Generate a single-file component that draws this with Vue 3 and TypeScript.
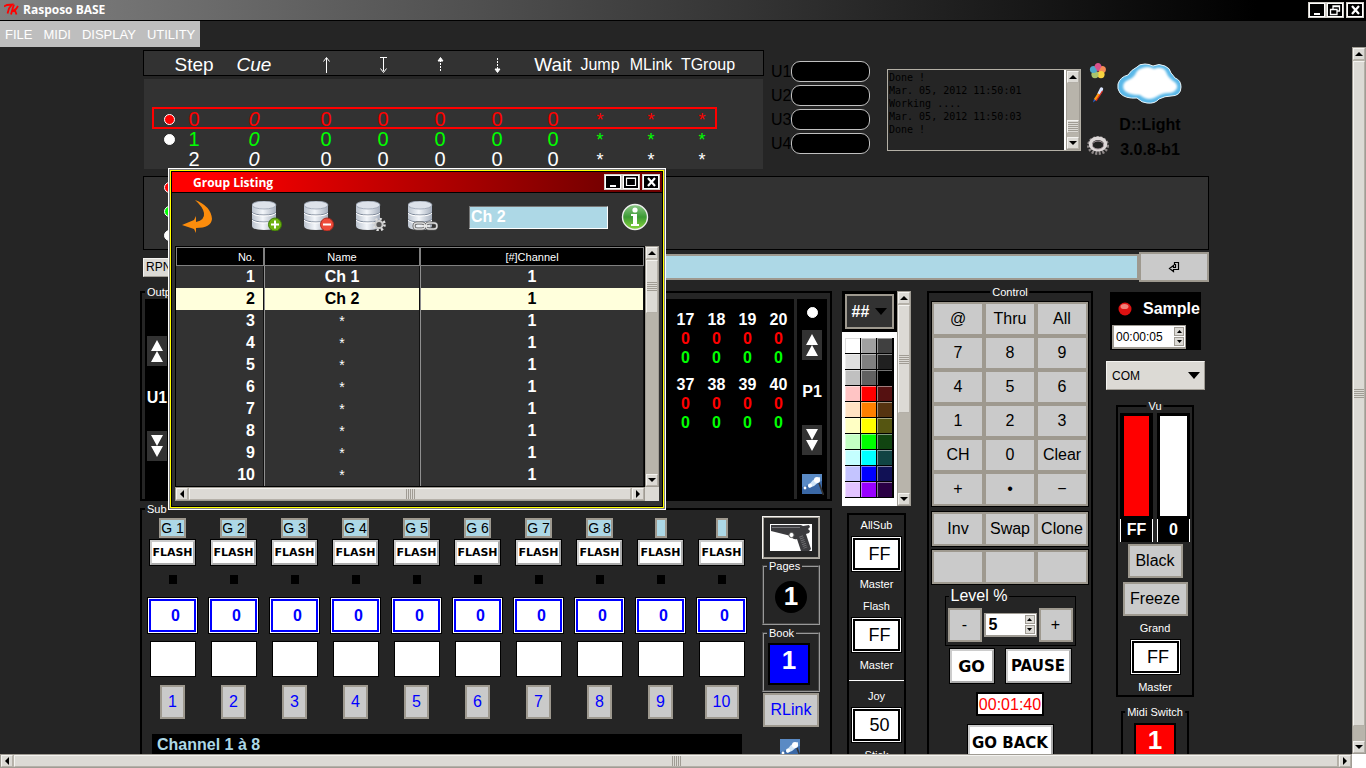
<script setup lang="ts">
import { defineComponent, h, ref } from 'vue'

const ScrollBar = defineComponent({
  props: {
    horizontal: Boolean,
    start: { type: Number, default: 0 },
    size: { type: Number, default: 100 },
  },
  setup(props) {
    const arrow = (label: string, d: string) =>
      h('button', { class: 'sb-arrow', 'aria-label': label }, [
        h('svg', { viewBox: '0 0 8 8', width: 8, height: 8 }, [h('path', { d })]),
      ])
    return () => {
      const thumb = props.horizontal
        ? { left: props.start + '%', width: props.size + '%' }
        : { top: props.start + '%', height: props.size + '%' }
      return h('div', { class: ['sb', props.horizontal ? 'sb-h' : 'sb-v'] }, [
        props.horizontal
          ? arrow('Scroll left', 'M6 0v8L2 4z')
          : arrow('Scroll up', 'M0 6h8L4 2z'),
        h('div', { class: 'sb-trough' }, [
          h('div', { class: 'sb-thumb', style: thumb }, [h('i', { class: 'sb-grip' })]),
        ]),
        props.horizontal
          ? arrow('Scroll right', 'M2 0v8l4-4z')
          : arrow('Scroll down', 'M0 2h8L4 6z'),
      ])
    }
  },
})

const menus = ['FILE', 'MIDI', 'DISPLAY', 'UTILITY']

const steps = [
  { step: '0', tone: 'red', dot: 'red' },
  { step: '1', tone: 'green', dot: 'white' },
  { step: '2', tone: 'plain', dot: '' },
]
const universes = ['U1', 'U2', 'U3', 'U4']
const log = [
  'Done !',
  'Mar. 05, 2012 11:50:01',
  'Working ....',
  'Mar. 05, 2012 11:50:03',
  'Done !',
]

const channels = [17, 18, 19, 20, 37, 38, 39, 40]

const palette = [
  '#ffffff', '#a0a0a0', '#404040',
  '#dfdfdf', '#808080', '#202020',
  '#c0c0c0', '#606060', '#000000',
  '#ffc4c4', '#ff0000', '#551111',
  '#ffe2c4', '#ff8000', '#553311',
  '#ffffc4', '#ffff00', '#555511',
  '#c4ffc4', '#00ff00', '#114411',
  '#c4ffff', '#00ffff', '#114444',
  '#c4c4ff', '#0000ff', '#111155',
  '#e2c4ff', '#9900ff', '#2a0044',
]

const keys = ['@', 'Thru', 'All', '7', '8', '9', '4', '5', '6', '1', '2', '3', 'CH', '0', 'Clear', '+', '•', '−']
const edits = ['Inv', 'Swap', 'Clone']

const subs = Array.from({ length: 10 }, (_, i) => ({
  id: i + 1,
  group: i < 8 ? `G ${i + 1}` : '',
}))

const groups = Array.from({ length: 10 }, (_, i) => ({
  no: i + 1,
  name: i < 2 ? `Ch ${i + 1}` : '*',
  channel: 1,
}))

const selected = ref(2)
const groupName = ref('Ch 2')
const command = ref('')
const sampleTime = ref('00:00:05')
const level = ref('5')
const port = ref('COM')
</script>

<template>
  <div class="app">
    <header class="titlebar">
      <svg class="feather" viewBox="0 0 15 14" width="15" height="14">
        <path d="M0 3.500l3-1.500 5-.5-3 4-1.500 5M10 1.500L8.500 6 7 11.500M14 3l-3 4.500 1.500 4M8.500 8.500L13 5" fill="none" stroke="#f00" stroke-width="1.800" />
      </svg>
      <h1>Rasposo BASE</h1>
      <div class="winbtns">
        <button aria-label="Minimize"><svg viewBox="0 0 12 12" width="12" height="12"><path d="M3 9h6v2H3z" fill="#fff" /></svg></button>
        <button aria-label="Restore"><svg viewBox="0 0 12 12" width="12" height="12"><path d="M4 5V2h6.500v5H8M1.500 5.500H8v5H1.500zM4 2.500h6" fill="none" stroke="#fff" stroke-width="1.300" /></svg></button>
        <button class="close" aria-label="Close"><svg viewBox="0 0 12 12" width="12" height="12"><path d="M3 2l7 8M10 2l-7 8" stroke="#fff" stroke-width="2.200" /></svg></button>
      </div>
    </header>

    <nav class="menubar">
      <button v-for="m in menus" :key="m">{{ m }}</button>
    </nav>

    <div class="work">
      <main>
        <section class="top">
          <table class="steps">
            <thead>
              <tr>
                <th></th>
                <th>Step</th>
                <th class="cue">Cue</th>
                <th><svg viewBox="0 0 11 18" width="11" height="18"><path d="M5.500 17V2M2.500 5.500L5.500 1.500 8.500 5.500" /></svg></th>
                <th><svg viewBox="0 0 11 18" width="11" height="18"><path d="M2 1.500h7M5.500 1v14M2.500 12.500L5.500 16.500 8.500 12.500" /></svg></th>
                <th><svg viewBox="0 0 11 18" width="11" height="18"><path d="M5.500 15V4" stroke-dasharray="2 1" /><path d="M3 5L5.500 1.500 8 5z" fill="#fff" /></svg></th>
                <th><svg viewBox="0 0 11 18" width="11" height="18"><path d="M5.500 2v11" stroke-dasharray="2 1" /><path d="M3 13L5.500 16.500 8 13z" fill="#fff" /></svg></th>
                <th>Wait</th>
                <th class="link">Jump</th>
                <th class="link">MLink</th>
                <th class="link">TGroup</th>
              </tr>
            </thead>
            <tbody>
              <tr v-for="(s, i) in steps" :key="s.step" :class="[s.tone, { current: i === 0 }]">
                <td><i v-if="s.dot" class="dot" :class="s.dot"></i></td>
                <td>{{ s.step }}</td>
                <td class="cue">0</td>
                <td v-for="n in 5" :key="n">0</td>
                <td v-for="n in 3" :key="'j' + n" class="link">*</td>
              </tr>
            </tbody>
          </table>

          <ul class="universes">
            <li v-for="u in universes" :key="u"><span>{{ u }}</span><i></i></li>
          </ul>

          <div class="log">
            <div class="lines"><p v-for="(l, i) in log" :key="i">{{ l }}</p></div>
            <ScrollBar :start="70" :size="25" />
          </div>

          <div class="tools">
            <button aria-label="Colours">
              <svg viewBox="0 0 18 18" width="18" height="18">
                <circle cx="13.300" cy="7.500" r="3.600" fill="#f58a55" /><circle cx="12" cy="12.600" r="3.600" fill="#f8d440" /><circle cx="6" cy="12.600" r="3.600" fill="#a9c46c" /><circle cx="4.500" cy="7.500" r="3.600" fill="#4fa8cc" /><path d="M9 10L5.500 4.500Q6 1 9 1t3.500 3.500z" fill="#d8518b" />
              </svg>
            </button>
            <button aria-label="Brush">
              <svg viewBox="0 0 12 18" width="12" height="18">
                <path d="M9.500 3L7 8" stroke="#dbe6ff" stroke-width="3.400" stroke-linecap="round" /><path d="M7 8l-4 6" stroke="#ff9a10" stroke-width="3" /><path d="M10.500 5L4 15" stroke="#d8281c" stroke-width="1.300" /><path d="M2 13l-1 3.500 2.500-2z" fill="#2563d8" />
              </svg>
            </button>
            <button class="cog" aria-label="Settings">
              <svg viewBox="0 0 22 20" width="22" height="20">
                <ellipse cx="11" cy="10.500" rx="9" ry="7.500" fill="none" stroke="#8f8989" stroke-width="4" stroke-dasharray="2 1.400" /><ellipse cx="11" cy="9" rx="7.500" ry="5.800" fill="none" stroke="#ddd8d8" stroke-width="3.600" /><ellipse cx="11" cy="10" rx="5.600" ry="4" fill="#222" stroke="#a89aa0" />
              </svg>
            </button>
          </div>

          <div class="brand">
            <svg viewBox="0 0 66 44" width="66" height="44">
              <defs><filter id="soft"><feGaussianBlur stdDeviation="1" /></filter></defs>
              <path d="M20 5q2-3 8-3 4 0 8 2 6-3 12 0 5 2 6 7 2 2 4 5 6 2 6 9 0 9-10 9-6 0-12 3-4 5-12 4-5 0-10-5-12 1-17-5-3-4-2-9 2-7 10-9 3-5 9-8z" fill="#5ab8e8" stroke="#e8f5fb" />
              <path d="M23 7q8-4 14 0 10-4 13 5 1 3 6 7 5 3 4 7-2 5-9 5-6 0-12 4-8 5-16-2-12 0-16-5-3-7 4-10 5-2 7-5 2-5 5-6z" fill="#fff" filter="url(#soft)" />
            </svg>
            <strong>D::Light</strong>
            <strong>3.0.8-b1</strong>
          </div>
        </section>

        <section class="strip">
          <i class="dot red"></i><i class="dot green"></i><i class="dot white"></i>
        </section>

        <form class="command" @submit.prevent>
          <button type="button" class="rpn">RPN</button>
          <input v-model="command" aria-label="Command line" />
          <button class="enter" aria-label="Enter">
            <svg viewBox="0 0 12 12" width="12" height="12"><path d="M6.500 1.500h4v7h-5v2L1.500 7.500l4-3v2h2v-3h-1z" fill="none" stroke="#000" stroke-width="1.200" /></svg>
          </button>
        </form>

        <section class="deck">
          <div class="colmain">
            <div class="frame output">
              <span class="legend">Output</span>
              <div class="side">
                <button class="page" aria-label="Universe up"><svg viewBox="0 0 20 30" width="20" height="30"><path d="M10 4l6 11H4zM10 15l6 11H4z" fill="#fff" /></svg></button>
                <b>U1</b>
                <button class="page" aria-label="Universe down"><svg viewBox="0 0 20 30" width="20" height="30"><path d="M4 4h12l-6 11zM4 15h12l-6 11z" fill="#fff" /></svg></button>
              </div>
              <div class="channels">
                <div v-for="c in channels" :key="c" class="chan">
                  <b>{{ c }}</b><span class="red">0</span><span class="green">0</span>
                </div>
              </div>
              <div class="side right">
                <i class="dot white"></i>
                <button class="page" aria-label="Page up"><svg viewBox="0 0 20 30" width="20" height="30"><path d="M10 4l6 11H4zM10 15l6 11H4z" fill="#fff" /></svg></button>
                <b>P1</b>
                <button class="page" aria-label="Page down"><svg viewBox="0 0 20 30" width="20" height="30"><path d="M4 4h12l-6 11zM4 15h12l-6 11z" fill="#fff" /></svg></button>
                <button class="wand" aria-label="Wizard"><svg viewBox="0 0 22 22" width="22" height="22"><path d="M0 0h20v20H0z" fill="#5a8ac4" /><path d="M0 13l20-6v13H0z" fill="#3a68a6" /><path d="M6 12l5-6 7-3v4l-6 5-5 2z" fill="#d3e7f8" /><circle cx="15" cy="6" r="3" fill="#fff" /><circle cx="8" cy="11.500" r="2" fill="#fff" /><circle cx="3" cy="14" r="1.400" fill="#fff" /><path d="M17 9l4.500 12" stroke="#333" stroke-width="1.600" /></svg></button>
              </div>
            </div>

            <div class="frame sub">
              <span class="legend">Sub</span>
              <div class="subleft">
                <div class="strips">
                  <div v-for="s in subs" :key="s.id" class="substrip">
                    <button class="grp" :class="{ empty: !s.group }" :aria-label="'Group of sub ' + s.id">{{ s.group }}</button>
                    <button class="raised flash">FLASH</button>
                    <i class="led"></i>
                    <input class="val" value="0" :aria-label="'Level of sub ' + s.id" />
                    <i class="blank"></i>
                    <button class="key num">{{ s.id }}</button>
                  </div>
                </div>
                <div class="caption">Channel 1 à 8</div>
              </div>
              <div class="subright">
                <button class="gun" aria-label="Gun">
                  <svg viewBox="0 0 42 27" width="42" height="27"><path d="M0 0h42v27H0z" fill="#fff" /><path d="M1 1h30l2 1 6-1 1 2-2 2 2 2-1 2-3 1 1 3 4 12-2 2h-8l-4-12q-4 1-6-3L1 7z" fill="#3b3b3e" /><path d="M2 3.500h28" stroke="#77777b" /><circle cx="21.500" cy="11" r="2.600" fill="#fff" stroke="#555" /><path d="M31 12l4.500 12" stroke="#6d6d70" stroke-width="4" stroke-dasharray="1 1" /></svg>
                </button>
                <div class="mini"><span class="legend">Pages</span><b class="round">1</b></div>
                <div class="mini book"><span class="legend">Book</span><b class="square">1</b></div>
                <button class="key rlink">RLink</button>
                <button class="wand" aria-label="Sub wizard"><svg viewBox="0 0 22 22" width="22" height="22"><path d="M0 0h20v20H0z" fill="#5a8ac4" /><path d="M0 13l20-6v13H0z" fill="#3a68a6" /><path d="M6 12l5-6 7-3v4l-6 5-5 2z" fill="#d3e7f8" /><circle cx="15" cy="6" r="3" fill="#fff" /><circle cx="8" cy="11.500" r="2" fill="#fff" /><circle cx="3" cy="14" r="1.400" fill="#fff" /><path d="M17 9l3 8" stroke="#333" stroke-width="1.600" /></svg></button>
              </div>
            </div>
          </div>

          <div class="colcolor">
            <div class="picker">
              <div class="pickleft">
                <div class="hash"><button>##<svg viewBox="0 0 12 7" width="12" height="7"><path d="M0 0h12L6 7z" /></svg></button></div>
                <div class="swatches">
                  <button v-for="(c, i) in palette" :key="i" :style="{ backgroundColor: c }" :class="{ on: i === 10 }" :aria-label="'Colour ' + c"></button>
                </div>
              </div>
              <ScrollBar :size="58" />
            </div>
            <div class="masters">
              <label for="m1">AllSub</label><input id="m1" class="ff" value="FF" /><span>Master</span>
              <label for="m2">Flash</label><input id="m2" class="ff" value="FF" /><span>Master</span>
              <hr />
              <label for="m3">Joy</label><input id="m3" class="ff" value="50" /><span>Stick</span>
            </div>
          </div>

          <div class="frame control">
            <span class="legend mid">Control</span>
            <div class="pad"><button v-for="k in keys" :key="k" class="key">{{ k }}</button></div>
            <div class="pad"><button v-for="k in edits" :key="k" class="key">{{ k }}</button></div>
            <div class="pad"><button v-for="n in 3" :key="n" class="key" :aria-label="'Free key ' + n"></button></div>
            <div class="level">
              <label class="legend" for="lvl">Level %</label>
              <button class="key">-</button>
              <div class="spin">
                <input id="lvl" v-model="level" />
                <span class="arrows"><button aria-label="Level up"><svg viewBox="0 0 5 3" width="5" height="3"><path d="M0 3h5L2.500 0z" /></svg></button><button aria-label="Level down"><svg viewBox="0 0 5 3" width="5" height="3"><path d="M0 0h5L2.500 3z" /></svg></button></span>
              </div>
              <button class="key">+</button>
            </div>
            <div class="transport">
              <button class="raised go">GO</button>
              <button class="raised pause">PAUSE</button>
            </div>
            <output class="timer">00:01:40</output>
            <button class="raised back">GO BACK</button>
          </div>

          <div class="colvu">
            <div class="sample">
              <div class="samplehead">
                <svg viewBox="0 0 14 14" width="14" height="14"><circle cx="7" cy="7" r="6.500" fill="#d11" /><ellipse cx="6.500" cy="4.500" rx="4" ry="2.600" fill="#f08078" /></svg>
                <label for="smp">Sample</label>
              </div>
              <div class="spin">
                <input id="smp" v-model="sampleTime" />
                <span class="arrows"><button aria-label="Sample up"><svg viewBox="0 0 5 3" width="5" height="3"><path d="M0 3h5L2.500 0z" /></svg></button><button aria-label="Sample down"><svg viewBox="0 0 5 3" width="5" height="3"><path d="M0 0h5L2.500 3z" /></svg></button></span>
              </div>
            </div>
            <div class="combo">
              <select v-model="port" aria-label="Port"><option>COM</option></select>
              <svg viewBox="0 0 12 7" width="12" height="7"><path d="M0 0h12L6 7z" /></svg>
            </div>
            <div class="frame vu">
              <span class="legend mid">Vu</span>
              <div class="meters">
                <div class="meter"><i class="redbar"></i><b>FF</b></div>
                <div class="meter"><i></i><b>0</b></div>
              </div>
              <button class="key black">Black</button>
              <button class="key freeze">Freeze</button>
              <label for="gm">Grand</label>
              <input id="gm" class="ff" value="FF" />
              <span>Master</span>
            </div>
            <div class="frame midi">
              <span class="legend mid">Midi Switch</span>
              <b>1</b>
            </div>
          </div>
        </section>
      </main>
      <ScrollBar :size="98" />
    </div>
    <footer class="hbar">
      <ScrollBar horizontal />
      <i></i>
    </footer>

    <div class="dialog" role="dialog" aria-label="Group Listing">
      <div class="dlgframe">
        <div class="dlgtitle">
          <h2>Group Listing</h2>
          <div class="winbtns">
            <button aria-label="Minimize listing"><svg viewBox="0 0 12 12" width="12" height="12"><path d="M3 9h6v2H3z" fill="#fff" /></svg></button>
            <button aria-label="Maximize listing"><svg viewBox="0 0 12 12" width="12" height="12"><path d="M1.500 2.500h9v7h-9zM1 2h10" fill="none" stroke="#fff" stroke-width="1.200" /></svg></button>
            <button class="close" aria-label="Close listing"><svg viewBox="0 0 12 12" width="12" height="12"><path d="M3 2l7 8M10 2l-7 8" stroke="#fff" stroke-width="2.200" /></svg></button>
          </div>
        </div>
        <div class="dlgtools">
          <button class="undo" aria-label="Back">
            <svg viewBox="0 0 30 34" width="30" height="34"><path d="M13 0q16 6 17 19-1 9-16 9v5l-2-4L0 25l12-5 2-4v6q9-2 8-9-1-6-9-13z" fill="#fb8c0c" /></svg>
          </button>
          <button v-for="kind in ['Add', 'Remove', 'Configure', 'Link']" :key="kind" class="db" :aria-label="kind">
            <svg viewBox="0 0 30 30" width="30" height="30">
              <defs><linearGradient id="metal"><stop offset="0" stop-color="#bcc4cf" /><stop offset=".45" stop-color="#f3f6fa" /><stop offset="1" stop-color="#a6afbd" /></linearGradient></defs>
              <path d="M0 4v21q0 4 12 4t12-4V4z" fill="url(#metal)" />
              <ellipse cx="12" cy="4" rx="12" ry="4" fill="#dde2ea" stroke="#98a2b1" stroke-width=".8" />
              <path d="M0 11q2 3 12 3t12-3M0 18q2 3 12 3t12-3" fill="none" stroke="#7f8a9a" /><path d="M0 12q2 3 12 3t12-3M0 19q2 3 12 3t12-3" fill="none" stroke="#fff" />
              <g v-if="kind === 'Add'"><circle cx="23" cy="23.500" r="6.500" fill="#6db110" stroke="#3d7a08" /><path d="M23 19.500v8M19 23.500h8" stroke="#fff" stroke-width="2" /></g>
              <g v-else-if="kind === 'Remove'"><circle cx="23" cy="23.500" r="6.500" fill="#ee4b3a" stroke="#ac2b20" /><path d="M19 23.500h8" stroke="#fff" stroke-width="2" /></g>
              <g v-else-if="kind === 'Configure'"><circle cx="23" cy="23.500" r="5.500" fill="none" stroke="#ddd" stroke-width="2.600" stroke-dasharray="2.200 2.100" /><circle cx="23" cy="23.500" r="3.600" fill="#555" stroke="#ccc" stroke-width="2" /></g>
              <g v-else fill="none"><rect x="6" y="22" width="11" height="6" rx="3" stroke="#555" stroke-width="3" /><rect x="18" y="22" width="11" height="6" rx="3" stroke="#555" stroke-width="3" /><rect x="6" y="22" width="11" height="6" rx="3" stroke="#ddd" stroke-width="1.400" /><rect x="18" y="22" width="11" height="6" rx="3" stroke="#ddd" stroke-width="1.400" /><path d="M13 25h9" stroke="#eee" stroke-width="1.600" /></g>
            </svg>
          </button>
          <input v-model="groupName" aria-label="Group name" />
          <button class="info" aria-label="Information">
            <svg viewBox="0 0 28 28" width="28" height="28">
              <defs><linearGradient id="leaf" x2="0" y2="1"><stop offset="0" stop-color="#8fca8a" /><stop offset=".5" stop-color="#3c9a34" /><stop offset="1" stop-color="#8ad63c" /></linearGradient></defs>
              <circle cx="14" cy="14" r="12.500" fill="url(#leaf)" stroke="#eee" stroke-width="1.400" />
              <circle cx="14" cy="7" r="2.600" fill="#fff" /><path d="M10 11h6v10h2v2h-8v-2h2v-8h-2z" fill="#fff" />
            </svg>
          </button>
        </div>
        <div class="listing">
          <div class="listtable">
            <table>
              <colgroup><col class="cno" /><col class="cname" /><col /></colgroup>
              <thead><tr><th>No.</th><th>Name</th><th>[#]Channel</th></tr></thead>
              <tbody>
                <tr v-for="g in groups" :key="g.no" :class="{ on: g.no === selected }" @click="selected = g.no">
                  <td>{{ g.no }}</td><td :class="{ star: g.name === '*' }">{{ g.name }}</td><td>{{ g.channel }}</td>
                </tr>
              </tbody>
            </table>
          </div>
          <ScrollBar :size="25" />
          <ScrollBar horizontal />
          <i></i>
        </div>
      </div>
    </div>
  </div>
</template>

<style>
html, body { margin: 0; background: #252525; overflow: hidden; }
button, input, select { font: inherit; margin: 0; padding: 0; border: 0; border-radius: 0; color: inherit; background: none; }
.sb, .sb * { box-sizing: border-box; }
.sb { display: flex; background: #b8b4ab; border: 1px solid #a09c94; }
.sb-v { width: 14px; flex-direction: column; }
.sb-h { height: 14px; }
.sb-arrow { flex: none; width: 12px; height: 12px; background: #dcdad5; border: 1px solid; border-color: #f4f3f0 #b4b0a8 #b4b0a8 #f4f3f0; display: flex; align-items: center; justify-content: center; }
.sb-arrow svg { flex: none; }
.sb-trough { flex: 1; position: relative; min-width: 0; min-height: 0; margin: 1px 0; }
.sb-h .sb-trough { margin: 0 1px; }
.sb-thumb { position: absolute; background: #dcdad5; border: 1px solid; border-color: #f4f3f0 #b4b0a8 #b4b0a8 #f4f3f0; display: flex; align-items: center; justify-content: center; }
.sb-v .sb-thumb { width: 100%; }
.sb-h .sb-thumb { height: 100%; }
.sb-grip { display: block; width: 10px; height: 9px; background: repeating-linear-gradient(#a09c94 0 1px, #dcdad5 1px 2px); }
.sb-h .sb-grip { width: 9px; height: 10px; background: repeating-linear-gradient(90deg, #a09c94 0 1px, #dcdad5 1px 2px); }
</style>

<style scoped>
* { box-sizing: border-box; }
.app { position: relative; height: 100vh; display: flex; flex-direction: column; overflow: hidden; background: #252525; color: #fff; font-family: "Liberation Sans", Arial, sans-serif; font-size: 16px; }
h1, h2, p, ul { margin: 0; padding: 0; }
svg { display: block; }

.titlebar { flex: none; height: 21px; display: flex; align-items: center; gap: 4px; padding: 0 2px 1px 4px; border-bottom: 1px solid #000; background: linear-gradient(90deg, #808080, #000 92%); }
.titlebar h1, .dlgtitle h2 { font: bold 12px "Open Sans", "Noto Sans", sans-serif; flex: 1; }
.winbtns { display: flex; }
.winbtns button { width: 18px; height: 16px; background: #000; border: 1px solid #d0cec8; outline: 1px solid #fff; outline-offset: -2px; display: flex; align-items: center; justify-content: center; }
.winbtns .close { margin-left: 2px; }

.menubar { flex: none; align-self: flex-start; height: 26px; padding: 0 5px; display: flex; gap: 11px; align-items: center; background: #bebebe; font-size: 13px; }
.work { flex: 1; min-height: 0; display: flex; overflow: hidden; }
main { flex: 1; min-width: 0; padding: 3px 143px 0 140px; overflow: hidden; }

.top { display: flex; margin-left: 3px; height: 119px; }
.steps { display: flex; flex-direction: column; gap: 3px; flex: 1; }
.steps tr { display: grid; grid-template-columns: 20px 30px 90px 54px 60px 54px 60px 52px 42px 60px 54px; }
.steps th, .steps td { padding: 0; display: flex; align-items: center; justify-content: center; font-weight: normal; white-space: nowrap; }
.steps thead { border: 1px solid #000; background: #323232; height: 26px; padding-left: 15px; font-size: 19px; }
.steps thead tr { height: 28px; }
.steps th svg { fill: none; stroke: #fff; stroke-width: 1; }
.steps thead .link { font-size: 16px; }
.steps .cue { font-style: italic; }
.steps tbody { background: #323232; margin: 0 1px; padding: 29px 0 0 9px; height: 90px; font-size: 20px; }
.steps tbody tr { height: 20px; width: 563px; grid-template-columns: 20px 30px 90px 54px 60px 54px 60px 52px 42px 60px 42px; padding-left: 6px; }
.steps tbody td { padding-bottom: 2px; }
.steps tbody .link { font-size: 18px; padding: 0; }
.steps .current { outline: 2px solid #f00; outline-offset: -1px; }
.red { color: #f00; }
.green { color: #0f0; }
.dot { display: block; width: 11px; height: 11px; border-radius: 50%; background: #fff; border: 1px solid #fff; }
.dot.red { background: #f00; }
.dot.green { background: #0f0; }

.universes { list-style: none; margin: 11px 0 0 7px; width: 99px; }
.universes li { height: 24px; display: flex; align-items: flex-start; color: #000; }
.universes span { width: 20px; line-height: 22px; }
.universes i { width: 79px; height: 21px; border: 1px solid #c0c0c0; border-radius: 9px; background: #000; }

.log { margin: 19px 0 0 17px; width: 194px; height: 82px; border: 1px solid #b4b0a6; display: flex; font: 10px/13px "DejaVu Sans Mono", monospace; color: #000; }
.lines { flex: 1; padding: 1px; border-right: 2px solid #fff; }
.lines p { white-space: nowrap; }
.tools { width: 22px; margin: 12px 0 0 6px; display: flex; flex-direction: column; align-items: center; gap: 6px; }
.tools .cog { margin-top: 25px; }
.brand { width: 82px; margin-right: 18px; padding-top: 12px; display: flex; flex-direction: column; align-items: center; color: #000; font-size: 16px; line-height: 25px; }
.brand svg { margin-bottom: 6px; }

.strip { margin: 7px 0 0 3px; height: 74px; border: 1px solid #000; background: #323232; display: flex; flex-direction: column; gap: 13px; padding: 5px 0 0 20px; }
.command { display: flex; align-items: center; margin: 2px 0 0 3px; height: 30px; }
.rpn { width: 60px; height: 19px; padding-left: 2px; text-align: left; background: #dcdad5; color: #000; font-size: 12px; border: 1px solid; border-color: #f4f3f0 #a09c94 #a09c94 #f4f3f0; }
.command input { flex: 1; min-width: 0; height: 26px; background: #add8e6; border: 2px solid #9e998f; color: #000; }
.enter { width: 70px; height: 30px; background: #cacaca; border: 2px solid #9e998f; display: flex; align-items: center; justify-content: center; }

.deck { margin-top: 9px; display: flex; height: 520px; padding-right: 4px; }
.frame { position: relative; border: 2px solid #000; font-size: 11px; }
.legend { position: absolute; top: -8px; left: 3px; padding: 0 2px; background: #252525; line-height: 14px; font-size: 11px; white-space: nowrap; color: #fff; }
.legend.mid { left: 50%; transform: translateX(-50%); }
.colmain { flex: 1; display: flex; flex-direction: column; }
.output { height: 210px; padding: 6px 3px 0; display: flex; gap: 3px; }
.side { width: 24px; background: #000; display: flex; flex-direction: column; align-items: center; padding-top: 37px; font-size: 16px; }
.side b { height: 65px; line-height: 64px; }
.side.right { width: 30px; padding-top: 8px; }
.side.right .page:first-of-type { margin-top: 12px; }
.page { background: #323232; flex: none; }
.side.right .wand { margin: 19px 0 0 2px; }
.channels { flex: 1; background: #000; display: grid; grid-template-columns: repeat(4, 31px); grid-auto-rows: 65px; justify-content: end; padding-top: 11px; font-size: 16px; font-weight: bold; }
.chan { display: flex; flex-direction: column; align-items: center; line-height: 19px; }

.sub { margin-top: 7px; flex: 1; border-bottom: 0; display: flex; padding: 8px 10px 0 0; }
.subleft { flex: 1; }
.strips { display: grid; grid-template-columns: repeat(10, 1fr); }
.substrip { display: flex; flex-direction: column; align-items: center; }
.grp { min-width: 25px; height: 20px; background: #add8e6; border: 2px solid #9e998f; color: #000; font-size: 14px; line-height: 16px; }
.grp.empty { min-width: 12px; width: 12px; }
.raised { background: #fff; color: #000; font-family: "DejaVu Sans", Verdana, sans-serif; font-weight: bold; border: 2px solid; border-color: #ccc #aaa #aaa #ccc; outline: 1px solid #000; white-space: nowrap; display: flex; align-items: center; justify-content: center; }
.flash { width: 45px; height: 25px; margin-top: 2px; font-size: 11px; }
.led { width: 8px; height: 9px; background: #000; margin-top: 10px; }
.val { width: 47px; height: 33px; margin: 15px 0 1px; border: 2px solid #00f; outline: 1px solid #fff; box-shadow: 0 0 0 2px #000; background: #fff; color: #00f; font-weight: bold; font-size: 16px; text-align: center; padding-left: 6px; }
.blank { width: 46px; height: 36px; margin-top: 8px; background: #fff; border: 1px solid #000; }
.key { background: #cacaca; color: #000; border: 2px solid #9e998f; font-size: 16px; display: flex; align-items: center; justify-content: center; }
.num { width: 25px; height: 34px; margin-top: 8px; color: #00f; }
.substrip:last-child .num { width: 34px; }
.caption { margin: 15px 0 0 10px; height: 40px; width: 590px; max-width: 100%; background: #000; color: #add8e6; font-weight: bold; font-size: 16px; padding: 2px 5px; }
.subright { width: 58px; margin-left: 10px; display: flex; flex-direction: column; align-items: center; }
.gun { width: 58px; height: 43px; border: 1px solid; border-color: #f4f3f0 #b4b0a8 #b4b0a8 #f4f3f0; outline: 1px solid #a09c94; outline-offset: -2px; display: flex; align-items: center; justify-content: center; margin-top: -2px; }
.mini { position: relative; width: 58px; height: 60px; border: 2px groove #999; margin-top: 6px; display: flex; align-items: center; justify-content: center; padding-top: 4px; font-size: 26px; }
.mini b { display: block; text-align: center; }
.mini.book { margin-top: 7px; }
.round { width: 32px; height: 32px; line-height: 30px; border-radius: 50%; background: #000; }
.square { width: 42px; height: 42px; line-height: 30px; background: #00f; border: 2px solid #000; margin-left: -4px; }
.rlink { width: 56px; height: 34px; margin-top: 1px; color: #00f; flex: none; }
.subright .wand { margin-top: 12px; }

.colcolor { width: 69px; margin-left: 10px; }
.picker { display: flex; height: 215px; }
.pickleft { flex: 1; background: #fff; }
.hash { height: 41px; background: #000; padding: 3px; }
.hash button { width: 49px; height: 35px; background: #323232; border: 2px solid #9e998f; display: flex; align-items: center; justify-content: center; gap: 6px; font-weight: bold; font-size: 16px; }
.swatches { margin: 6px 3px 0; width: 49px; background: #000; display: grid; grid-template-columns: repeat(3, 15px); gap: 1px; padding: 0 1px 1px 0; }
.swatches button { height: 15px; border: 1px solid rgba(255, 255, 255, .45); border-width: 1px 0 0 1px; }
.swatches button:nth-child(1) { border-color: #ddd; }
.swatches .on { border-color: #ff8080; }
.masters { margin: 7px 0 0 5px; width: 59px; height: 300px; border: 2px solid #000; display: flex; flex-direction: column; align-items: center; font-size: 11px; line-height: 14px; padding-top: 3px; }
.ff { width: 47px; height: 32px; margin: 6px 0 7px; flex: none; background: #fff; color: #000; border: 2px solid #000; outline: 1px solid #fff; box-shadow: 0 0 0 2px #000; text-align: center; padding-left: 6px; font-size: 18px; }
.masters span + label { margin-top: 8px; }
.masters hr { width: 100%; margin: 8px 0; border: 0; border-top: 1px solid #fff; flex: none; }

.control { width: 166px; margin-left: 16px; border-bottom: 0; padding: 8px 2px 0; display: flex; flex-direction: column; align-items: center; }
.pad { width: 158px; border: 1px solid #000; display: grid; grid-template-columns: repeat(3, 1fr); grid-auto-rows: 34px; margin-bottom: 2px; flex: none; }
.pad:first-of-type { margin-bottom: 4px; }
.level { position: relative; width: 131px; height: 50px; margin-top: 9px; border: 1px solid #000; display: flex; align-items: center; gap: 2px; padding: 8px 2px 0; flex: none; }
.level .legend { font-size: 16px; line-height: 18px; top: -10px; }
.level .key { width: 34px; height: 34px; }
.spin { display: flex; height: 24px; background: #fff; color: #000; border: 1px solid #a09c94; border-width: 1px 1px 2px 2px; padding: 1px; }
.spin input { flex: 1; min-width: 0; width: 100%; }
.arrows { flex: none; display: flex; flex-direction: column; gap: 1px; }
.arrows button { width: 10px; flex: 1; background: #dcdad5; border: 1px solid #a09c94; display: flex; align-items: center; justify-content: center; }
.level .spin { flex: 1; font-weight: bold; font-size: 16px; }
.level .spin input { padding: 0 2px; }
.transport { display: flex; gap: 12px; margin-top: 3px; }
.go { width: 44px; height: 34px; font-size: 16px; }
.pause { width: 65px; height: 34px; font-size: 15px; }
.timer { width: 68px; height: 24px; margin-top: 9px; background: #fff; border: 2px solid #000; color: #f00; font-size: 16px; line-height: 21px; text-align: center; flex: none; }
.back { width: 85px; height: 36px; margin-top: 9px; font-size: 15px; flex: none; }

.colvu { width: 99px; margin-left: 13px; display: flex; flex-direction: column; }
.sample { width: 91px; height: 58px; margin: 1px 0 0 4px; background: #000; padding-left: 2px; flex: none; }
.samplehead { height: 33px; padding-left: 6px; display: flex; align-items: center; gap: 11px; font-weight: bold; }
.sample .spin { width: 74px; font-size: 12px; }
.sample .spin input { padding-left: 1px; }
.combo { position: relative; height: 29px; margin-top: 11px; flex: none; }
.combo select { appearance: none; width: 100%; height: 100%; background: #dcdad5; color: #000; font-size: 12px; padding-left: 5px; border: 1px solid; border-color: #f4f3f0 #a09c94 #a09c94 #f4f3f0; }
.combo svg { position: absolute; right: 5px; top: 11px; pointer-events: none; }
.vu { width: 78px; height: 293px; margin: 15px 0 0 10px; display: flex; flex-direction: column; align-items: center; padding-top: 6px; line-height: 14px; }
.meters { display: flex; gap: 4px; }
.meter { width: 33px; }
.meter i { display: block; height: 106px; background: #fff; border: 3px solid #000; }
.meter i.redbar { background: #f00; border-width: 3px 4px; }
.meter b { display: block; height: 23px; line-height: 22px; background: #000; border: 1px solid #fff; border-width: 0 1px; font-size: 16px; text-align: center; }
.black { width: 55px; height: 34px; margin-top: 2px; }
.freeze { width: 65px; height: 34px; margin: 4px 0 5px; }
.midi { width: 68px; height: 100px; margin: 14px 0 0 15px; }
.midi b { display: block; width: 42px; height: 42px; margin: 10px auto 0; background: #f00; border: 2px solid #000; font-size: 26px; line-height: 30px; text-align: center; }

.hbar { flex: none; height: 14px; display: flex; background: #fff; }
.hbar .sb { flex: 1; }
.hbar i { width: 14px; }

.dialog { position: absolute; left: 168px; top: 168px; width: 498px; border: 1px solid #fff; background: #808080; padding: 1px; }
.dlgframe { border: 1px solid #ff0; outline: 1px solid #000; outline-offset: -2px; padding: 1px 4px 6px 4px; background: #323232; }
.dlgtitle { height: 21px; margin: 0 -3px; padding: 0 2px 0 21px; display: flex; align-items: center; border-bottom: 1px solid #000; background: linear-gradient(90deg, #f00 8%, #700000 92%); }
.dlgtools { height: 53px; display: flex; align-items: center; padding: 0 0 5px 7px; }
.undo { width: 30px; margin-right: 40px; }
.db { width: 30px; margin-right: 22px; padding-bottom: 2px; }
.dlgtools input { width: 139px; height: 23px; margin: 0 13px 0 9px; background: #add8e6; border: 1px solid; border-color: #777 #fff #fff #777; font-weight: bold; padding: 0 1px; }
.listing { display: grid; grid-template-columns: 1fr 14px; grid-template-rows: auto 14px; }
.listing i { background: #dcdad5; }
.listtable { border: 1px solid #000; }
.listtable table { width: 100%; table-layout: fixed; border-collapse: separate; border-spacing: 0; cursor: default; }
.cno { width: 88px; }
.cname { width: 156px; }
.listtable th { height: 19px; padding: 0; background: #000; border: 1px solid #808080; font-weight: normal; font-size: 11px; line-height: 14px; }
.listtable td { height: 22px; padding: 0; text-align: center; font-weight: bold; font-size: 16px; line-height: 20px; border-right: 1px solid #111; }
.listtable td + td { border-left: 1px solid #909090; }
.listtable th:first-child, .listtable td:first-child { text-align: right; padding-right: 8px; }
.listtable .star { font-weight: normal; font-size: 14px; }
.listtable .on { background: #ffffdc; color: #000; }
</style>
